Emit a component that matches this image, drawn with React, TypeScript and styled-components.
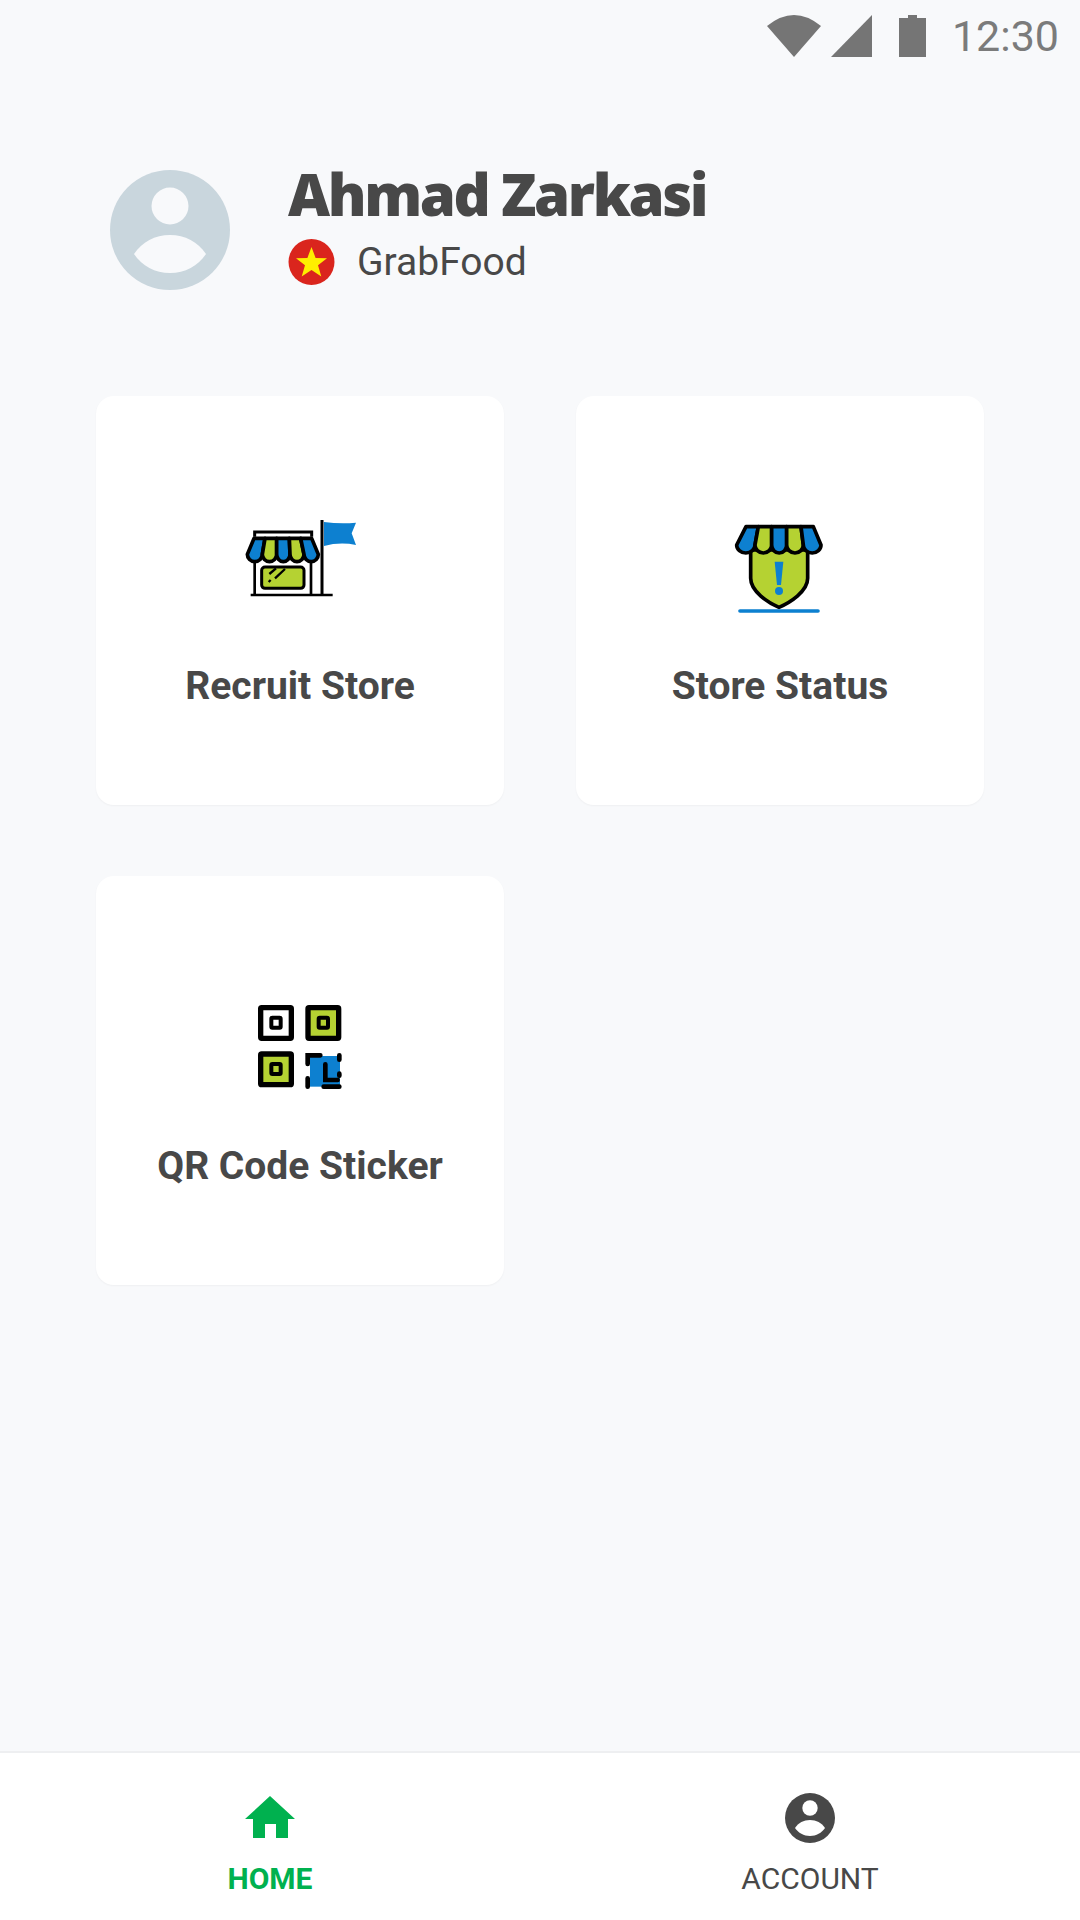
import React from "react";
import styled, { createGlobalStyle } from "styled-components";

const Global = createGlobalStyle`
  html, body { margin: 0; padding: 0; background: #f8f9fb; }
  * { box-sizing: border-box; }
`;

const Screen = styled.div`
  width: 1080px;
  height: 1920px;
  display: flex;
  flex-direction: column;
  background: #f8f9fb;
  font-family: Roboto, "Liberation Sans", sans-serif;
  color: #484848;
`;

const StatusBar = styled.div`
  height: 72px;
  padding: 15px 21px 0 0;
  display: flex;
  justify-content: flex-end;
  align-items: flex-start;
  color: #757575;
`;

const StatusIcon = styled.svg<{ $gap: number }>`
  display: block;
  margin-right: ${(p) => p.$gap}px;
  fill: currentColor;
`;

const Clock = styled.span`
  font-size: 43px;
  line-height: 42px;
  color: #7b7b7b;
`;

const Header = styled.header`
  display: flex;
  align-items: center;
  gap: 58px;
  padding: 98px 0 0 110px;
`;

const Avatar = styled.svg`
  display: block;
  width: 120px;
  height: 120px;
`;

const Identity = styled.div`
  display: flex;
  flex-direction: column;
  margin-top: -16px;
`;

const Name = styled.h1`
  margin: 0;
  font-family: "Noto Sans", Lato, sans-serif;
  font-weight: 900;
  font-size: 58px;
  line-height: 70px;
  letter-spacing: -2.4px;
  color: #484848;
`;

const Service = styled.div`
  display: flex;
  align-items: center;
  gap: 22px;
  font-size: 39px;
  line-height: 46px;
  margin-top: 10px;
`;

const Grid = styled.main`
  flex: 1;
  display: grid;
  grid-template-columns: repeat(2, 408px);
  grid-auto-rows: 409px;
  gap: 71px 72px;
  padding: 106px 0 0 96px;
  align-content: start;
`;

const Card = styled.section`
  background: #fff;
  border-radius: 18px;
  box-shadow: 0 1px 2px rgba(0, 0, 0, 0.04);
  padding-top: 104px;
  display: flex;
  flex-direction: column;
  align-items: center;
`;

const CardIcon = styled.svg`
  display: block;
  width: 150px;
  height: 120px;
`;

const CardLabel = styled.div`
  margin-top: 44px;
  font-size: 39px;
  line-height: 44px;
  font-weight: 700;
  color: #484848;
`;

const BottomNav = styled.nav`
  height: 169px;
  display: grid;
  grid-template-columns: 1fr 1fr;
  background: #fff;
  border-top: 2px solid #eeeff1;
`;

const NavItem = styled.div<{ $active?: boolean }>`
  display: flex;
  flex-direction: column;
  align-items: center;
  padding-top: 40px;
  font-size: 30px;
  line-height: 36px;
  font-weight: ${(p) => (p.$active ? 700 : 400)};
  color: ${(p) => (p.$active ? "#00b14f" : "#484848")};
`;

const NavLabel = styled.span`
  margin-top: 18px;
`;

const NavIcon = styled.svg`
  display: block;
  width: 50px;
  height: 50px;
  fill: currentColor;
`;

const K = "#000";
const B = "#0d80d0";
const G = "#b5d232";

function Awning({ top, bottom, y0, y1, r }: { top: number[]; bottom: number[]; y0: number; y1: number; r: number }) {
  return (
    <>
      {[0, 1, 2, 3, 4].map((i) => (
        <path
          key={i}
          d={`M${top[i]},${y0} L${top[i + 1]},${y0} L${bottom[i + 1]},${y1} A${(bottom[i + 1] - bottom[i]) / 2},${r} 0 0 1 ${bottom[i]},${y1} Z`}
          fill={i % 2 === 0 ? B : G}
          stroke={K}
          strokeWidth={11}
          strokeLinejoin="round"
        />
      ))}
    </>
  );
}

function RecruitIcon() {
  return (
    <CardIcon viewBox="-15 0 450 360">
      <path d="M74,110 V96 H245 V110" fill="none" stroke={K} strokeWidth={9} />
      <path d="M74,180 V285 M243,180 V285 M62,285 H308" fill="none" stroke={K} strokeWidth={8} />
      <path d="M276,60 V285" stroke={K} strokeWidth={9} fill="none" />
      <path d="M282,66 Q330,72 378,68 L365,100 L378,135 Q330,125 282,138 Z" fill={B} />
      <Awning top={[72, 105, 140, 178, 212, 245]} bottom={[52, 97, 140, 180, 222, 265]} y0={115} y1={163} r={22} />
      <rect x={95} y={201} width={127} height={64} rx={10} fill={G} stroke={K} strokeWidth={9} />
      <path d="M116,246 L122,240 M135,235 L165,207 M118,222 L138,205" stroke={K} strokeWidth={7} fill="none" />
    </CardIcon>
  );
}

function StatusStoreIcon() {
  return (
    <CardIcon viewBox="-45 -30 450 360">
      <path d="M92,120 L92,205 C92,245 145,278 177,292 C209,278 263,245 263,205 L263,120 Z" fill={G} stroke={K} strokeWidth={11} strokeLinejoin="round" />
      <Awning top={[78, 115, 155, 200, 243, 280]} bottom={[50, 105, 155, 200, 250, 303]} y0={50} y1={105} r={24} />
      <path d="M164,155 H190 L183,225 H171 Z" fill={B} />
      <circle cx={177} cy={243} r={12} fill={B} />
      <path d="M60,303 H294" stroke={B} strokeWidth={11} strokeLinecap="round" />
    </CardIcon>
  );
}

function QrFinder({ x, y, fill }: { x: number; y: number; fill: string }) {
  return (
    <>
      <rect x={x} y={y} width={92} height={92} fill={fill} stroke={K} strokeWidth={16} rx={3} />
      <rect x={x + 32} y={y + 30} width={28} height={30} fill={fill} stroke={K} strokeWidth={12} rx={3} />
    </>
  );
}

function QrIcon() {
  return (
    <CardIcon viewBox="-60 -45 450 360">
      <QrFinder x={47} y={38} fill="#fff" />
      <QrFinder x={189} y={38} fill={G} />
      <QrFinder x={47} y={177} fill={G} />
      <rect x={195} y={183} width={90} height={92} fill={B} />
      <path
        d="M188,207 V181 H226 M283,181 V194 M188,250 V275 M236,275 H283 M283,236 V242 M241,208 V255 H278"
        fill="none"
        stroke={K}
        strokeWidth={14}
        strokeLinecap="round"
      />
    </CardIcon>
  );
}

function PersonIcon({ bg, fg }: { bg: string; fg: string }) {
  return (
    <>
      <circle cx={60} cy={60} r={60} fill={bg} />
      <circle cx={60} cy={36} r={18.5} fill={fg} />
      <path d="M24,84 C32,72 45,65 60,65 C75,65 88,72 96,84 C88,96 75,103 60,103 C45,103 32,96 24,84Z" fill={fg} />
    </>
  );
}

export default function App() {
  return (
    <Screen>
      <Global />
      <StatusBar>
        <StatusIcon $gap={10} width={54} height={42} viewBox="0 0 54 42">
          <path d="M0,11 Q27,-11 54,11 L27,42 Z" />
        </StatusIcon>
        <StatusIcon $gap={27} width={41} height={42} viewBox="0 0 41 42">
          <path d="M41,0 V42 H0 Z" />
        </StatusIcon>
        <StatusIcon $gap={26} width={27} height={42} viewBox="0 0 27 42">
          <path d="M9,0 H18 V3 H27 V42 H0 V3 H9 Z" />
        </StatusIcon>
        <Clock>12:30</Clock>
      </StatusBar>

      <Header>
        <Avatar viewBox="0 0 120 120">
          <PersonIcon bg="#c9d6dd" fg="#f8f9fb" />
        </Avatar>
        <Identity>
          <Name>Ahmad Zarkasi</Name>
          <Service>
            <svg width={47} height={46} viewBox="0 0 47 46">
              <circle cx={23.5} cy={23} r={23} fill="#da251d" />
              <path d="M23.5,8 L27.6,18.9 L39,19.2 L30,26.3 L33.3,37.5 L23.5,31 L13.7,37.5 L17,26.3 L8,19.2 L19.4,18.9 Z" fill="#ffef00" />
            </svg>
            GrabFood
          </Service>
        </Identity>
      </Header>

      <Grid>
        <Card>
          <RecruitIcon />
          <CardLabel>Recruit Store</CardLabel>
        </Card>
        <Card>
          <StatusStoreIcon />
          <CardLabel>Store Status</CardLabel>
        </Card>
        <Card>
          <QrIcon />
          <CardLabel>QR Code Sticker</CardLabel>
        </Card>
      </Grid>

      <BottomNav>
        <NavItem $active>
          <NavIcon viewBox="0 0 50 50">
            <path d="M25,3 L50,26 H43 V45 H31 V31 H20 V45 H8 V26 H0 Z" />
          </NavIcon>
          <NavLabel>HOME</NavLabel>
        </NavItem>
        <NavItem>
          <NavIcon viewBox="0 0 120 120">
            <PersonIcon bg="#484848" fg="#fff" />
          </NavIcon>
          <NavLabel>ACCOUNT</NavLabel>
        </NavItem>
      </BottomNav>
    </Screen>
  );
}
